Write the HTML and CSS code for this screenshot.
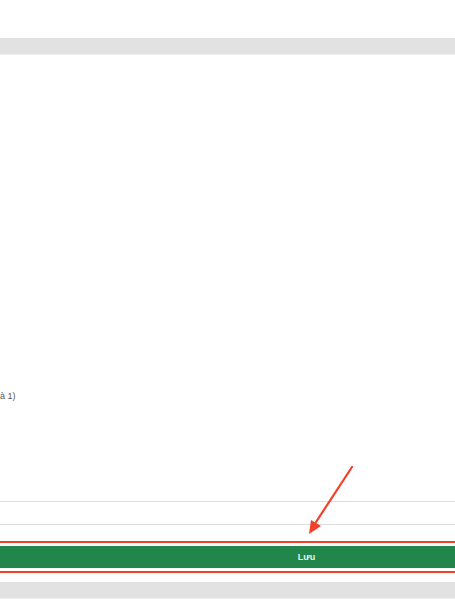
FILE: index.html
```html
<!DOCTYPE html>
<html lang="vi">
<head>
    <meta charset="UTF-8">
    <meta name="viewport" content="width=device-width, initial-scale=1.0">
    <title>Lưu</title>
    <link rel="stylesheet" href="styles.css">
</head>
<body>
    <div class="page">
        <div class="panel-head"></div>
        <div class="panel-body">
            <p class="hint">à 1)</p>
            <div class="field"></div>
            <div class="field last"></div>
            <div class="save-box">
                <button class="save-btn">Lưu</button>
            </div>
        </div>
        <div class="panel-foot"></div>

        <!-- annotation arrow -->
        <svg class="arrow" width="60" height="80" viewBox="0 0 60 80">
            <line x1="52" y1="7" x2="16" y2="62" stroke="#f2402a" stroke-width="2.2" stroke-linecap="round"/>
            <polygon points="9,74 11,60 21,66" fill="#f2402a"/>
        </svg>
    </div>
</body>
</html>
```

FILE: styles.css
```css
body {
    margin: 0;
    background-color: #ffffff;
    font-family: "Liberation Sans", Arial, sans-serif;
}
.page {
    position: relative;
    padding-top: 38px;
}
.panel-head {
    height: 16px;
    background-color: #e2e2e2;
    border-bottom: 1px solid #ededed;
}
.panel-body {
    padding-top: 335px;
}
.hint {
    margin: 0;
    font-size: 9px;
    line-height: 12px;
    color: #555;
}
.field {
    height: 22px;
    border-top: 1px solid #dddddd;
}
.field:first-of-type {
    margin-top: 99px;
}
.field.last {
    height: 16px;
}
.save-box {
    border-top: 2px solid #f2402a;
    border-bottom: 2px solid #f2402a;
    padding: 3px 0;
}
.save-btn {
    display: block;
    width: 100%;
    height: 22px;
    border: none;
    background-color: #22864b;
    color: #e8f2ec;
    font-family: "Liberation Sans", Arial, sans-serif;
    font-size: 9px;
    font-weight: bold;
    padding: 0 0 0 158px;
    margin: 0;
}
.panel-foot {
    margin-top: 9px;
    height: 16px;
    background-color: #e2e2e2;
    border-bottom: 1px solid #ededed;
}
.arrow {
    position: absolute;
    left: 300px;
    top: 460px;
}
```
